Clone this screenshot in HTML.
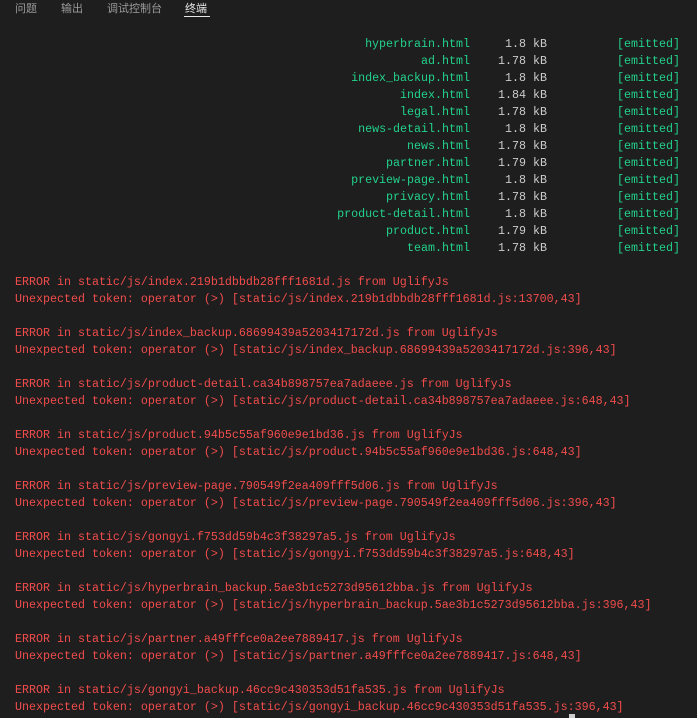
<!DOCTYPE html>
<html><head><meta charset="utf-8"><style>
body{margin:0;background:#1e1e1e;width:697px;height:718px;overflow:hidden;position:relative;font-family:"Liberation Mono",monospace;font-size:11.67px}
.tabs{position:absolute;top:0;left:0;height:18px;font-family:"Liberation Sans","Noto Sans CJK SC",sans-serif;font-size:11px;color:#9a9a9a}
.tabs span{position:absolute;top:0;white-space:nowrap}
.ul{position:absolute;left:184px;top:16px;width:26px;height:1px;background:#e7e7e7}
.out{position:absolute;left:15px;top:36px}
.out2{position:absolute;left:15px;top:274px}
.r{height:17px;line-height:17px;white-space:pre;display:flex}
.b{height:17px}
.f{width:455px;text-align:right;color:#23d18b}
.s{width:77px;text-align:right;color:#cccccc}
.e{width:133px;text-align:right;color:#23d18b}
.err{color:#f14c4c}
</style></head><body>
<div class="tabs"><span style="left:15px">问题</span><span style="left:61px">输出</span><span style="left:107px">调试控制台</span><span style="left:185px;color:#e7e7e7">终端</span></div>
<div class="ul"></div>
<div class="out">
<div class="r"><span class="f">hyperbrain.html</span><span class="s">1.8 kB</span><span class="e">[emitted]</span></div>
<div class="r"><span class="f">ad.html</span><span class="s">1.78 kB</span><span class="e">[emitted]</span></div>
<div class="r"><span class="f">index_backup.html</span><span class="s">1.8 kB</span><span class="e">[emitted]</span></div>
<div class="r"><span class="f">index.html</span><span class="s">1.84 kB</span><span class="e">[emitted]</span></div>
<div class="r"><span class="f">legal.html</span><span class="s">1.78 kB</span><span class="e">[emitted]</span></div>
<div class="r"><span class="f">news-detail.html</span><span class="s">1.8 kB</span><span class="e">[emitted]</span></div>
<div class="r"><span class="f">news.html</span><span class="s">1.78 kB</span><span class="e">[emitted]</span></div>
<div class="r"><span class="f">partner.html</span><span class="s">1.79 kB</span><span class="e">[emitted]</span></div>
<div class="r"><span class="f">preview-page.html</span><span class="s">1.8 kB</span><span class="e">[emitted]</span></div>
<div class="r"><span class="f">privacy.html</span><span class="s">1.78 kB</span><span class="e">[emitted]</span></div>
<div class="r"><span class="f">product-detail.html</span><span class="s">1.8 kB</span><span class="e">[emitted]</span></div>
<div class="r"><span class="f">product.html</span><span class="s">1.79 kB</span><span class="e">[emitted]</span></div>
<div class="r"><span class="f">team.html</span><span class="s">1.78 kB</span><span class="e">[emitted]</span></div>
</div>
<div class="out2">
<div class="r err">ERROR in static/js/index.219b1dbbdb28fff1681d.js from UglifyJs</div>
<div class="r err">Unexpected token: operator (&gt;) [static/js/index.219b1dbbdb28fff1681d.js:13700,43]</div>
<div class="b"></div>
<div class="r err">ERROR in static/js/index_backup.68699439a5203417172d.js from UglifyJs</div>
<div class="r err">Unexpected token: operator (&gt;) [static/js/index_backup.68699439a5203417172d.js:396,43]</div>
<div class="b"></div>
<div class="r err">ERROR in static/js/product-detail.ca34b898757ea7adaeee.js from UglifyJs</div>
<div class="r err">Unexpected token: operator (&gt;) [static/js/product-detail.ca34b898757ea7adaeee.js:648,43]</div>
<div class="b"></div>
<div class="r err">ERROR in static/js/product.94b5c55af960e9e1bd36.js from UglifyJs</div>
<div class="r err">Unexpected token: operator (&gt;) [static/js/product.94b5c55af960e9e1bd36.js:648,43]</div>
<div class="b"></div>
<div class="r err">ERROR in static/js/preview-page.790549f2ea409fff5d06.js from UglifyJs</div>
<div class="r err">Unexpected token: operator (&gt;) [static/js/preview-page.790549f2ea409fff5d06.js:396,43]</div>
<div class="b"></div>
<div class="r err">ERROR in static/js/gongyi.f753dd59b4c3f38297a5.js from UglifyJs</div>
<div class="r err">Unexpected token: operator (&gt;) [static/js/gongyi.f753dd59b4c3f38297a5.js:648,43]</div>
<div class="b"></div>
<div class="r err">ERROR in static/js/hyperbrain_backup.5ae3b1c5273d95612bba.js from UglifyJs</div>
<div class="r err">Unexpected token: operator (&gt;) [static/js/hyperbrain_backup.5ae3b1c5273d95612bba.js:396,43]</div>
<div class="b"></div>
<div class="r err">ERROR in static/js/partner.a49fffce0a2ee7889417.js from UglifyJs</div>
<div class="r err">Unexpected token: operator (&gt;) [static/js/partner.a49fffce0a2ee7889417.js:648,43]</div>
<div class="b"></div>
<div class="r err">ERROR in static/js/gongyi_backup.46cc9c430353d51fa535.js from UglifyJs</div>
<div class="r err">Unexpected token: operator (&gt;) [static/js/gongyi_backup.46cc9c430353d51fa535.js:396,43]</div>
</div>
<div style="position:absolute;left:569px;top:714px;width:6px;height:4px;background:#cccccc"></div>
</body></html>
